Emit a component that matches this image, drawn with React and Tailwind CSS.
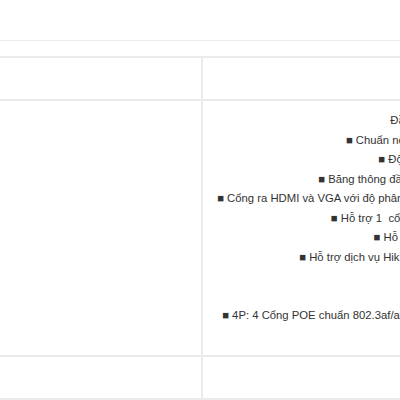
const specs = [
  "Đầu ghi hình camera IP 4 kênh POE",
  "■ Chuẩn nén hình ảnh: H.265+, H.265, H.264+, H.264",
  "■ Độ phân giải ghi hình lên đến 8MP / 4K",
  "■ Băng thông đầu vào tối đa 40Mbps, băng thông đầu ra 80Mbps",
  "■ Cổng ra HDMI và VGA với độ phân giải lên tới 4K (HDMI) & 1080p (cổng VGA) hỗ trợ hiển thị đồng thời",
  "■ Hỗ trợ 1  cổng SATA, dung lượng tối đa 10TB mỗi ổ cứng.",
  "■ Hỗ trợ 01 cổng USB 2.0 và 1 cổng RJ-45",
  "■ Hỗ trợ dịch vụ Hik-Connect, xem qua điện thoại, máy tính dễ dàng hơn",
  "",
  "",
  "■ 4P: 4 Cổng POE chuẩn 802.3af/at, khoảng cách truyền tải tối đa 250 m, tổng công suất lên đến 60 W.",
];

export default function App() {
  return (
    <div className="w-[400px] h-[400px] overflow-hidden bg-white font-['Liberation_Sans',Arial,sans-serif] text-[11.3px] text-[#333]">
      <div className="h-[41px] border-b border-[#ebebeb]" />
      <div className="h-[15px]" />
      <div className="w-[760px] border-t-2 border-[#ebebeb]">
        <div className="flex h-[43px] border-b-2 border-[#ebebeb]">
          <div className="w-[203px] border-r-2 border-[#ebebeb]" />
          <div className="flex-1" />
        </div>
        <div className="flex h-[256px] border-b-2 border-[#ebebeb]">
          <div className="w-[203px] border-r-2 border-[#ebebeb]" />
          <div className="flex-1 pt-[10px] text-center leading-[19.5px]">
            {specs.map((s, i) => (
              <div key={i} className="whitespace-pre h-[19.5px]">{s}</div>
            ))}
          </div>
        </div>
        <div className="flex h-[43px] border-b-2 border-[#ebebeb]">
          <div className="w-[203px] border-r-2 border-[#ebebeb]" />
          <div className="flex-1" />
        </div>
      </div>
    </div>
  );
}
